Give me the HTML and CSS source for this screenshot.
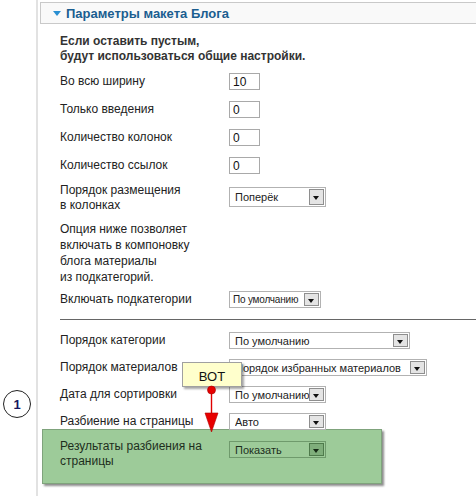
FILE: index.html
```html
<!DOCTYPE html>
<html lang="ru">
<head>
    <meta charset="UTF-8">
    <meta name="viewport" content="width=device-width, initial-scale=1.0">
    <title>Параметры макета Блога</title>
    <link rel="stylesheet" href="styles.css">
</head>
<body>
    <div class="page">
        <div class="marker">1</div>

        <div class="panel">
            <h3 class="panel-title"><span class="toggler"></span>Параметры макета Блога</h3>
            <div class="panel-body">
                <p class="intro">Если оставить пустым,<br>будут использоваться общие настройки.</p>

                <ul class="fields">
                    <li class="field">
                        <label>Во всю ширину</label>
                        <input class="text" type="text" value="10">
                    </li>
                    <li class="field">
                        <label>Только введения</label>
                        <input class="text" type="text" value="0">
                    </li>
                    <li class="field">
                        <label>Количество колонок</label>
                        <input class="text" type="text" value="0">
                    </li>
                    <li class="field">
                        <label>Количество ссылок</label>
                        <input class="text" type="text" value="0">
                    </li>
                    <li class="field tall">
                        <label>Порядок размещения<br>в колонках</label>
                        <span class="select big w97"><span class="value">Поперёк</span><span class="arrow"></span></span>
                    </li>
                </ul>

                <p class="note">Опция ниже позволяет<br>включать в компоновку<br>блога материалы<br>из подкатегорий.</p>

                <ul class="fields">
                    <li class="field">
                        <label>Включать подкатегории</label>
                        <span class="select narrow w92"><span class="value">По умолчанию</span><span class="arrow"></span></span>
                    </li>
                </ul>

                <div class="divider"></div>

                <ul class="fields lower">
                    <li class="field">
                        <label>Порядок категории</label>
                        <span class="select w181"><span class="value">По умолчанию</span><span class="arrow"></span></span>
                    </li>
                    <li class="field">
                        <label>Порядок материалов</label>
                        <span class="select w198"><span class="value">Порядок избранных материалов</span><span class="arrow"></span></span>
                    </li>
                    <li class="field">
                        <label>Дата для сортировки</label>
                        <span class="select w97"><span class="value">По умолчанию</span><span class="arrow"></span></span>
                    </li>
                    <li class="field">
                        <label>Разбиение на страницы</label>
                        <span class="select w97"><span class="value">Авто</span><span class="arrow"></span></span>
                    </li>
                </ul>

                <div class="highlight">
                    <div class="field">
                        <label>Результаты разбиения на<br>страницы</label>
                        <span class="select ghost w97"><span class="value">Показать</span><span class="arrow"></span></span>
                    </div>
                </div>
            </div>
        </div>

        <div class="tip">ВОТ</div>
        <svg class="pointer" width="16" height="50" viewBox="0 0 16 50">
            <line x1="7.5" y1="6" x2="7.5" y2="31" stroke="#e00000" stroke-width="1.4"/>
            <polygon points="1,29 14,29 7.5,48" fill="#e80000" stroke="#b00000" stroke-width="0.6"/>
            <circle cx="7.5" cy="6" r="4" fill="#e80000" stroke="#a00000" stroke-width="0.6"/>
        </svg>
    </div>
</body>
</html>
```

FILE: styles.css
```css
* {
    box-sizing: border-box;
    margin: 0;
    padding: 0;
}

body {
    font-family: "Liberation Sans", Arial, sans-serif;
    font-size: 12px;
    color: #222;
    background: #fff;
}

.page {
    position: relative;
    width: 476px;
    height: 496px;
    overflow: hidden;
}

/* numbered callout on the left */
.marker {
    position: absolute;
    left: 3px;
    top: 390px;
    width: 28px;
    height: 28px;
    border: 1.5px solid #222;
    border-radius: 50%;
    display: flex;
    align-items: center;
    justify-content: center;
    font-size: 13px;
    font-weight: bold;
    color: #17175e;
}

.panel {
    margin-left: 36px;
    height: 100%;
    border-left: 2px solid #e2e2e2;
    padding: 2px 0 0 2px;
}

.panel-title {
    display: flex;
    align-items: center;
    height: 22px;
    padding-left: 12px;
    background: #f9f9f9;
    border-top: 1px solid #c9c9c9;
    border-bottom: 1px solid #c9c9c9;
    border-left: 1px solid #c9c9c9;
    font-size: 13px;
    font-weight: bold;
    color: #1b5e90;
}

.toggler {
    width: 0;
    height: 0;
    margin-right: 5px;
    border-left: 4px solid transparent;
    border-right: 4px solid transparent;
    border-top: 5px solid #2a8fd2;
}

.panel-body {
    padding: 10px 0 0 20px;
}

.intro {
    font-weight: bold;
    line-height: 15px;
    color: #333;
    margin-bottom: 9px;
}

.fields {
    list-style: none;
}

.field {
    display: flex;
    align-items: flex-start;
    margin-bottom: 11px;
}

.field label {
    width: 169px;
    flex-shrink: 0;
    line-height: 15px;
    padding-top: 1px;
}

.field.tall {
    margin-top: -3px;
}

.field.tall .select {
    margin-top: 5px;
}

.note {
    line-height: 16px;
    margin: -3px 0 6px;
}

.text {
    width: 31px;
    height: 17px;
    padding: 0 3px;
    border: 1px solid #a9a9a9;
    font-family: "Liberation Sans", Arial, sans-serif;
    font-size: 12px;
    color: #111;
    background: #fff;
    outline: none;
}

.select {
    display: flex;
    align-items: center;
    height: 17px;
    border: 1px solid #b2b2b2;
    background: #fff;
    padding: 0 1px 0 5px;
    font-size: 11px;
    color: #222;
    white-space: nowrap;
    overflow: hidden;
}

.select.big {
    height: 20px;
}

.select.narrow {
    padding-left: 3px;
    font-size: 10px;
    letter-spacing: -0.2px;
}

.select .value {
    flex: 1;
    overflow: hidden;
}

.select .arrow {
    position: relative;
    width: 15px;
    height: 13px;
    flex-shrink: 0;
    background: #e4e4e4;
    border: 1px solid #8e8e8e;
}

.select.big .arrow {
    height: 16px;
}

.select .arrow::after {
    content: "";
    position: absolute;
    left: 3px;
    top: 50%;
    margin-top: -1px;
    border-left: 3.5px solid transparent;
    border-right: 3.5px solid transparent;
    border-top: 4px solid #111;
}

.w92 { width: 92px; }
.w97 { width: 97px; }
.w181 { width: 181px; }
.w198 { width: 198px; }

.divider {
    border-top: 1px solid #666;
    margin: 1px 0 12px;
}

.fields.lower .field {
    margin-bottom: 10px;
}

/* green box marking the row in question */
.highlight {
    width: 340px;
    margin: -11px 0 0 -18px;
    padding: 9px 0 14px 17px;
    background: #9dcb99;
    border: 1px solid #7fa37c;
    box-shadow: 2px 2px 2px rgba(0, 0, 0, 0.45);
}

.highlight .field {
    margin: 0;
}

.highlight label {
    padding-top: 0;
    color: #1d2f1d;
}

.select.ghost {
    margin-top: 2px;
    background: transparent;
    border-color: #6f9a6c;
    color: #1d2f1d;
}

.select.ghost .arrow {
    background: #7fae7b;
    border-color: #4e7a4b;
}

.select.ghost .arrow::after {
    border-top-color: #142814;
}

.tip {
    position: absolute;
    left: 182px;
    top: 362px;
    width: 60px;
    height: 25px;
    z-index: 2;
    background: #ffffcc;
    border: 1px solid #a0a0a0;
    box-shadow: 2px 2px 2px rgba(0, 0, 0, 0.35);
    text-align: center;
    line-height: 27px;
    font-size: 13px;
    color: #111;
}

.pointer {
    position: absolute;
    left: 204px;
    top: 384px;
    z-index: 3;
}
```
